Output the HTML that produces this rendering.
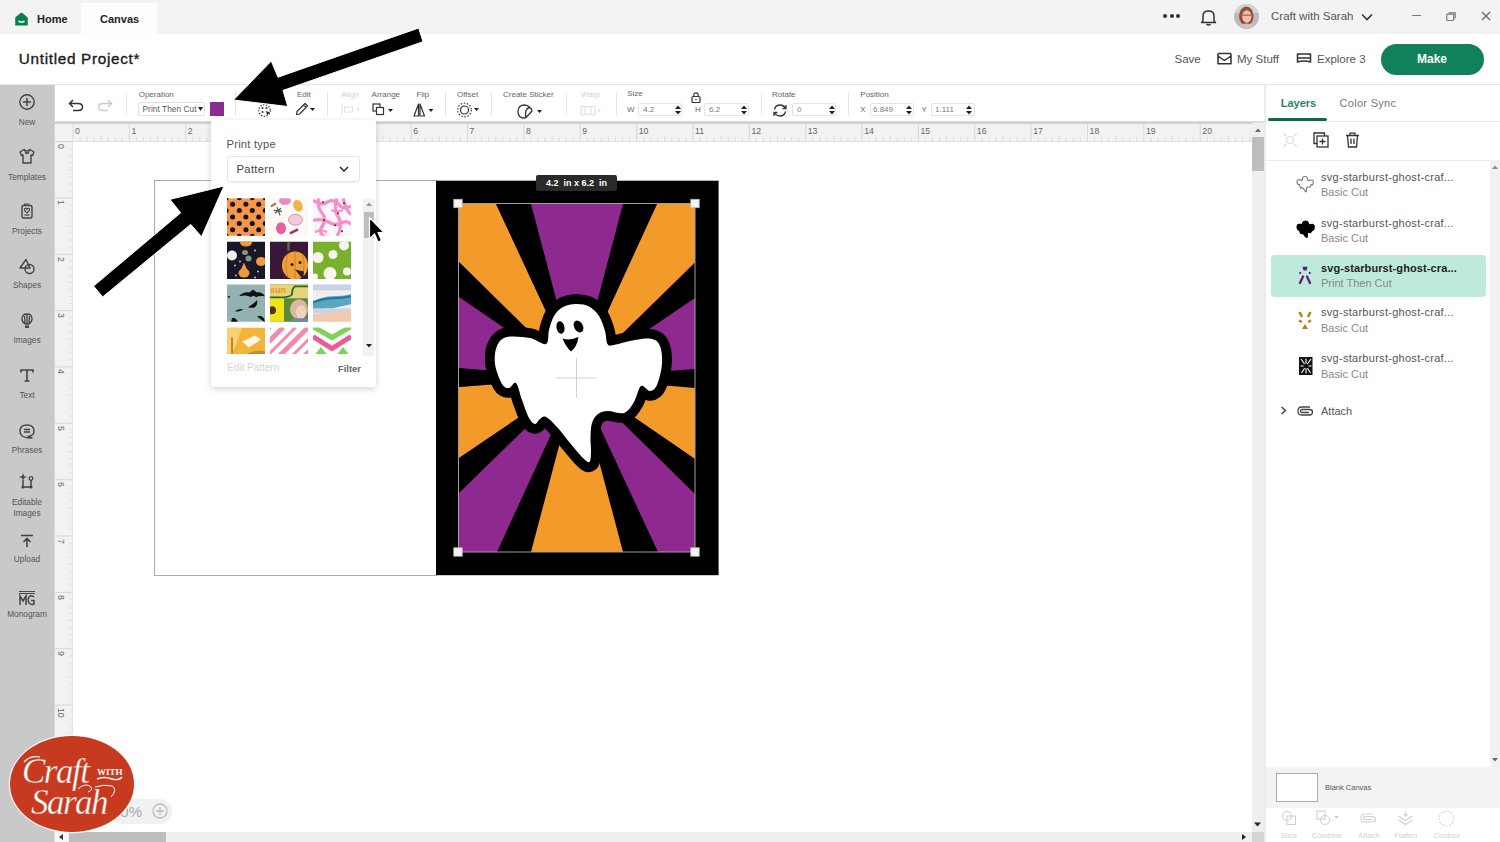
<!DOCTYPE html><html><head><meta charset="utf-8"><style>
html,body{margin:0;padding:0;width:1500px;height:842px;overflow:hidden;background:#fff;}
body{position:relative;font-family:"Liberation Sans",sans-serif;}
.t{position:absolute;white-space:nowrap;line-height:1;}
.r{position:absolute;box-sizing:border-box;}
svg{position:absolute;overflow:visible;}
</style></head><body>
<div class="r" style="left:0px;top:0px;width:1500px;height:34px;background:#f3f3f3;"></div>
<div class="r" style="left:81px;top:3px;width:76px;height:31px;background:#fdfdfd;"></div>
<svg style="left:15.2px;top:11.8px" width="13" height="14" viewBox="0 0 13 14"><path d="M5.6 1 Q6.5 0.3 7.4 1 L12.2 5 Q12.8 5.5 12.8 6.3 V13.6 H0.2 V6.3 Q0.2 5.5 0.8 5Z" fill="#0b7f4f"/><path d="M3.5 9 Q6.5 11.3 9.5 9" stroke="#c8f5e0" stroke-width="1.7" fill="none"/></svg>
<div class="t" style="left:37px;top:13.9px;font-size:11px;font-weight:bold;color:#222;">Home</div>
<div class="t" style="left:100px;top:13.9px;font-size:11px;font-weight:bold;color:#222;">Canvas</div>
<div class="r" style="left:1163.0px;top:14px;width:4px;height:4px;background:#333;border-radius:50%;"></div>
<div class="r" style="left:1169.5px;top:14px;width:4px;height:4px;background:#333;border-radius:50%;"></div>
<div class="r" style="left:1176.0px;top:14px;width:4px;height:4px;background:#333;border-radius:50%;"></div>
<svg style="left:1200px;top:8px" width="17" height="18" viewBox="0 0 17 18"><path d="M3 13 V8 Q3 3 8.5 3 Q14 3 14 8 V13 L15.5 14.5 H1.5Z" fill="none" stroke="#333" stroke-width="1.5" stroke-linejoin="round"/><path d="M6.5 16 Q8.5 18 10.5 16" fill="none" stroke="#333" stroke-width="1.5"/></svg>
<svg style="left:1233.5px;top:3.8px" width="25" height="25" viewBox="0 0 25 25"><defs><clipPath id="av"><circle cx="12.5" cy="12.5" r="12.4"/></clipPath></defs><g clip-path="url(#av)"><rect width="25" height="25" fill="#b9b9bf"/><rect x="0" y="0" width="25" height="9" fill="#c9d6de"/><ellipse cx="12.3" cy="12" rx="7.2" ry="9.5" fill="#a24a2a"/><ellipse cx="12.8" cy="12.5" rx="4.6" ry="6.2" fill="#e6c2b2"/><rect x="8.5" y="10.5" width="8.5" height="1.3" fill="#8a6a60"/><ellipse cx="12.5" cy="25" rx="10" ry="5.5" fill="#c6c4c4"/></g></svg>
<div class="t" style="left:1271px;top:11.3px;font-size:11.5px;color:#555;">Craft with Sarah</div>
<svg style="left:1361px;top:13px" width="12" height="8" viewBox="0 0 12 8"><path d="M1 1.5 L6 6.5 L11 1.5" fill="none" stroke="#333" stroke-width="1.6"/></svg>
<div class="r" style="left:1412px;top:15px;width:9px;height:1.3px;background:#777;"></div>
<svg style="left:1446px;top:12px" width="10" height="9" viewBox="0 0 10 9"><rect x="0.7" y="2.2" width="7" height="6.3" fill="none" stroke="#777" stroke-width="1.2" rx="1"/><path d="M2.5 0.8 H9.2 V6.5" fill="none" stroke="#777" stroke-width="1.2"/></svg>
<svg style="left:1481px;top:11px" width="10" height="10" viewBox="0 0 10 10"><path d="M1 1 L9 9 M9 1 L1 9" stroke="#666" stroke-width="1.3"/></svg>
<div class="r" style="left:0px;top:34px;width:1500px;height:50px;background:#fff;"></div>
<div class="t" style="left:18.8px;top:50.8px;font-size:15.3px;color:#1a1a1a;letter-spacing:0.68px;-webkit-text-stroke:0.35px #1a1a1a;">Untitled Project*</div>
<div class="t" style="left:1174.5px;top:53.6px;font-size:11.5px;color:#555;">Save</div>
<svg style="left:1217px;top:52px" width="15" height="13" viewBox="0 0 15 13"><path d="M1 1.5 V11.8 H14 V1.5 M1 4 L7.5 8.5 L14 4 M1 1.5 H14" fill="none" stroke="#333" stroke-width="1.5" stroke-linejoin="round"/></svg>
<div class="t" style="left:1237px;top:53.6px;font-size:11.5px;color:#555;">My Stuff</div>
<svg style="left:1296px;top:53px" width="16" height="10" viewBox="0 0 16 10"><path d="M1.5 1 H14.5 V9 Q8 7 1.5 9 Z M1.5 5 H14.5" fill="none" stroke="#333" stroke-width="1.5" stroke-linejoin="round"/></svg>
<div class="t" style="left:1317px;top:53.6px;font-size:11.5px;color:#555;">Explore 3</div>
<div class="r" style="left:1380.5px;top:43.5px;width:103.5px;height:31px;background:#11815a;border-radius:16px;"></div>
<div class="t" style="left:1332px;width:200px;text-align:center;top:53.3px;font-size:12px;color:#fff;font-weight:bold;">Make</div>
<div class="r" style="left:0px;top:83.5px;width:1500px;height:1.5px;background:#e6e6e6;"></div>
<div class="r" style="left:0px;top:85px;width:54px;height:757px;background:#c9c9c9;"></div>
<div class="r" style="left:54px;top:85px;width:1px;height:757px;background:#d8d8d8;"></div>
<div class="t" style="left:-73px;width:200px;text-align:center;top:117.8px;font-size:8.3px;color:#555;">New</div>
<div class="t" style="left:-73px;width:200px;text-align:center;top:172.8px;font-size:8.3px;color:#555;">Templates</div>
<div class="t" style="left:-73px;width:200px;text-align:center;top:226.8px;font-size:8.3px;color:#555;">Projects</div>
<div class="t" style="left:-73px;width:200px;text-align:center;top:281.3px;font-size:8.3px;color:#555;">Shapes</div>
<div class="t" style="left:-73px;width:200px;text-align:center;top:336.4px;font-size:8.3px;color:#555;">Images</div>
<div class="t" style="left:-73px;width:200px;text-align:center;top:391.4px;font-size:8.3px;color:#555;">Text</div>
<div class="t" style="left:-73px;width:200px;text-align:center;top:445.9px;font-size:8.3px;color:#555;">Phrases</div>
<div class="t" style="left:-73px;width:200px;text-align:center;top:497.9px;font-size:8.3px;color:#555;">Editable</div>
<div class="t" style="left:-73px;width:200px;text-align:center;top:509.2px;font-size:8.3px;color:#555;">Images</div>
<div class="t" style="left:-73px;width:200px;text-align:center;top:555.3px;font-size:8.3px;color:#555;">Upload</div>
<div class="t" style="left:-73px;width:200px;text-align:center;top:609.5px;font-size:8.3px;color:#555;">Monogram</div>
<svg style="left:19px;top:94px" width="16" height="16" viewBox="0 0 16 16"><circle cx="8" cy="8" r="7.2" fill="none" stroke="#444" stroke-width="1.4"/><path d="M8 4 V12 M4 8 H12" stroke="#444" stroke-width="1.5"/></svg>
<svg style="left:19px;top:148px" width="16" height="16" viewBox="0 0 16 16"><path d="M5 1.5 L1 4 L2.5 7.5 L4 7 V15 H12 V7 L13.5 7.5 L15 4 L11 1.5 Q8 4.5 5 1.5Z" fill="none" stroke="#444" stroke-width="1.4" stroke-linejoin="round"/><path d="M5.5 2 L7 6 L8 4 L9 6 L10.5 2" fill="none" stroke="#444" stroke-width="1"/></svg>
<svg style="left:21px;top:203px" width="12" height="16" viewBox="0 0 12 16"><rect x="1" y="2.5" width="10" height="12.5" rx="1.5" fill="none" stroke="#444" stroke-width="1.4"/><path d="M3.5 2.5 V1 H8.5" fill="none" stroke="#444" stroke-width="1.2"/><path d="M6 10 L3.6 7.4 Q2.8 5.6 4.5 5.3 Q5.5 5.2 6 6.2 Q6.5 5.2 7.5 5.3 Q9.2 5.6 8.4 7.4Z" fill="none" stroke="#444" stroke-width="1.1"/><path d="M3.5 12 H8.5" stroke="#444" stroke-width="1.2"/></svg>
<svg style="left:19px;top:258px" width="16" height="17" viewBox="0 0 16 17"><path d="M7 1.5 L1 10 H11Z" fill="none" stroke="#444" stroke-width="1.4" stroke-linejoin="round"/><circle cx="10.5" cy="11" r="4.5" fill="none" stroke="#444" stroke-width="1.4"/></svg>
<svg style="left:21px;top:313px" width="12" height="16" viewBox="0 0 12 16"><path d="M6 1 Q11 1 11 6 Q11 9 8 11 H4 Q1 9 1 6 Q1 1 6 1Z M6 1 V11 M3.5 3 Q4 8 4 11 M8.5 3 Q8 8 8 11" fill="none" stroke="#444" stroke-width="1.3"/><path d="M4 12.5 H8 V15 H4Z" fill="#444"/></svg>
<svg style="left:20px;top:369px" width="14" height="13" viewBox="0 0 14 13"><path d="M1 3.5 V1 H13 V3.5 M7 1 V12 M4.5 12 H9.5" fill="none" stroke="#444" stroke-width="1.6"/></svg>
<svg style="left:19px;top:424px" width="16" height="15" viewBox="0 0 16 15"><path d="M8 1 Q15 1 15 7 Q15 12 9 12.5 L13 14 Q4 14 2.5 11 Q1 9.5 1 7 Q1 1 8 1Z" fill="none" stroke="#444" stroke-width="1.4" stroke-linejoin="round"/><path d="M5 5.5 H11 M5 8 H11" stroke="#444" stroke-width="1.3"/></svg>
<svg style="left:19px;top:472px" width="16" height="17" viewBox="0 0 16 17"><path d="M4 8 V15 H12 V8 M4 15 H12" fill="none" stroke="#444" stroke-width="1.5"/><circle cx="4" cy="15" r="1.6" fill="#444"/><circle cx="12" cy="15" r="1.6" fill="#444"/><circle cx="12" cy="6.5" r="1.8" fill="none" stroke="#444" stroke-width="1.3"/><path d="M4 1 L5 4 L8 5 L5 6 L4 9 L3 6 L0 5 L3 4Z" fill="#444"/></svg>
<svg style="left:20px;top:534px" width="14" height="14" viewBox="0 0 14 14"><path d="M1 1.5 H13 M7 13 V5 M3.5 8 L7 4.5 L10.5 8" fill="none" stroke="#444" stroke-width="1.6"/></svg>
<svg style="left:18px;top:590px" width="18" height="16" viewBox="0 0 18 16"><path d="M1 1.5 H17 M1 3.5 H17" stroke="#444" stroke-width="1"/><path d="M2 15 V6 L5 11 L8 6 V15" fill="none" stroke="#444" stroke-width="1.5"/><path d="M16 7 Q14 5 12 6 Q9.5 8 10.5 12 Q12 15.5 16 14 V10.5 H13" fill="none" stroke="#444" stroke-width="1.5"/></svg>
<div class="r" style="left:55px;top:85px;width:1211px;height:37px;background:#fff;"></div>
<div class="r" style="left:55px;top:121px;width:1211px;height:1.5px;background:#dcdcdc;"></div>
<svg style="left:68px;top:99px" width="16" height="13" viewBox="0 0 16 13"><path d="M5 1 L1.5 4.5 L5 8 M1.5 4.5 H10 Q14.5 4.5 14.5 8 Q14.5 11.5 10 11.5 H5" fill="none" stroke="#333" stroke-width="1.5"/></svg>
<svg style="left:97px;top:99px" width="16" height="13" viewBox="0 0 16 13"><path d="M11 1 L14.5 4.5 L11 8 M14.5 4.5 H6 Q1.5 4.5 1.5 8 Q1.5 11.5 6 11.5 H11" fill="none" stroke="#ccc" stroke-width="1.5"/></svg>
<div class="r" style="left:126px;top:92px;width:1px;height:24px;background:#e6e6e6;"></div>
<div class="r" style="left:235px;top:92px;width:1px;height:24px;background:#e6e6e6;"></div>
<div class="r" style="left:326.6px;top:92px;width:1px;height:24px;background:#e6e6e6;"></div>
<div class="r" style="left:445px;top:92px;width:1px;height:24px;background:#e6e6e6;"></div>
<div class="r" style="left:491px;top:92px;width:1px;height:24px;background:#e6e6e6;"></div>
<div class="r" style="left:566.4px;top:92px;width:1px;height:24px;background:#e6e6e6;"></div>
<div class="r" style="left:615.6px;top:92px;width:1px;height:24px;background:#e6e6e6;"></div>
<div class="r" style="left:760.7px;top:92px;width:1px;height:24px;background:#e6e6e6;"></div>
<div class="r" style="left:848.2px;top:92px;width:1px;height:24px;background:#e6e6e6;"></div>
<div class="t" style="left:138.7px;top:90.9px;font-size:8px;color:#666;">Operation</div>
<div class="r" style="left:138px;top:102px;width:67px;height:13.5px;border:1px solid #e0e0e0;border-radius:2px;background:#fff;"></div>
<div class="t" style="left:142.5px;top:106.1px;font-size:8.2px;color:#555;letter-spacing:0.1px;">Print Then Cut</div>
<svg style="left:198px;top:107px" width="5" height="4" viewBox="0 0 5 4"><path d="M0 0 H5 L2.5 4Z" fill="#222"/></svg>
<div class="r" style="left:210px;top:102px;width:14px;height:14px;background:#8d2a90;"></div>
<svg style="left:257.5px;top:104px" width="15" height="13" viewBox="0 0 15 13"><circle cx="6.5" cy="6.5" r="5.8" fill="none" stroke="#333" stroke-width="1.3" stroke-dasharray="1.3 1.5"/><circle cx="4.5" cy="4" r="1" fill="#333"/><circle cx="8.5" cy="4" r="1" fill="#333"/><circle cx="4.5" cy="8" r="1" fill="#333"/><path d="M8 7 L12 8.5 L9 11Z" fill="#222"/></svg>
<div class="t" style="left:297px;top:90.9px;font-size:8px;color:#666;">Edit</div>
<svg style="left:295px;top:102px" width="22" height="14" viewBox="0 0 22 14"><path d="M1.5 12.5 L2 9.5 L10 1.5 L12.5 4 L4.5 12 Z M8.5 3 L11 5.5" fill="none" stroke="#333" stroke-width="1.2" stroke-linejoin="round"/><path d="M15 6 H20 L17.5 9Z" fill="#222"/></svg>
<div class="t" style="left:341px;top:90.8px;font-size:8px;color:#d0d0d0;">Align</div>
<svg style="left:341px;top:104px" width="22" height="11" viewBox="0 0 22 11"><path d="M1 0 V11" stroke="#ddd" stroke-width="1"/><rect x="3.5" y="3" width="8" height="5" fill="none" stroke="#ddd" stroke-width="1"/><path d="M15 4.5 H19 L17 7Z" fill="#ddd"/></svg>
<div class="t" style="left:371.6px;top:90.8px;font-size:8px;color:#666;">Arrange</div>
<svg style="left:372px;top:103px" width="22" height="14" viewBox="0 0 22 14"><rect x="1" y="1" width="7" height="7" fill="none" stroke="#333" stroke-width="1.2"/><rect x="4.5" y="4.5" width="7" height="7" fill="#fff" stroke="#333" stroke-width="1.2"/><path d="M16 6 H21 L18.5 9Z" fill="#222"/></svg>
<div class="t" style="left:416.4px;top:90.8px;font-size:8px;color:#666;">Flip</div>
<svg style="left:413px;top:103px" width="22" height="14" viewBox="0 0 22 14"><path d="M5.5 1 L1 13 H5.5Z M7 1 L11.5 13 H7Z" fill="none" stroke="#333" stroke-width="1.2" stroke-linejoin="round"/><path d="M15.5 6 H20.5 L18 9Z" fill="#222"/></svg>
<div class="t" style="left:457px;top:90.8px;font-size:8px;color:#666;">Offset</div>
<svg style="left:457px;top:102px" width="24" height="16" viewBox="0 0 24 16"><circle cx="7.5" cy="8" r="4" fill="none" stroke="#333" stroke-width="1.2"/><circle cx="7.5" cy="8" r="6.8" fill="none" stroke="#333" stroke-width="1.2" stroke-dasharray="1.5 1.6"/><path d="M17 6 H22 L19.5 9Z" fill="#222"/></svg>
<div class="t" style="left:503px;top:90.8px;font-size:8px;color:#666;">Create Sticker</div>
<svg style="left:517px;top:104px" width="26" height="15" viewBox="0 0 26 15"><path d="M13 3.5 Q10.5 1 7.5 1 Q1 1 1 7.5 Q1 14 7.5 14 Q8.5 14 9 13.5 L15 7 Q15 5 13 3.5 Q9 4 8.5 9 Q8.5 12 9 13.5" fill="none" stroke="#333" stroke-width="1.3" stroke-linejoin="round"/><path d="M20 6 H25 L22.5 9Z" fill="#222"/></svg>
<div class="t" style="left:581px;top:90.8px;font-size:8px;color:#d0d0d0;">Warp</div>
<svg style="left:580px;top:105px" width="22" height="11" viewBox="0 0 22 11"><path d="M1 1 Q8 3 15 1 V10 Q8 8 1 10Z M5 2 V9 M11 2 V9" fill="none" stroke="#ddd" stroke-width="1"/><path d="M17 4.5 H21 L19 7Z" fill="#ddd"/></svg>
<div class="t" style="left:627.2px;top:90.4px;font-size:8px;color:#666;">Size</div>
<div class="t" style="left:627px;top:105.7px;font-size:8px;color:#666;">W</div>
<div class="r" style="left:638.4px;top:103px;width:44px;height:13px;border:1px solid #e4e4e4;border-radius:2px;"></div>
<div class="t" style="left:643px;top:105.7px;font-size:8px;color:#777;">4.2</div>
<svg style="left:674.5px;top:104.5px" width="6" height="10" viewBox="0 0 6 10"><path d="M0 4 L3 0.5 L6 4Z M0 6 L3 9.5 L6 6Z" fill="#222"/></svg>
<svg style="left:690.5px;top:92px" width="10" height="11" viewBox="0 0 10 11"><rect x="1" y="4.5" width="8" height="6" rx="1" fill="none" stroke="#333" stroke-width="1.2"/><path d="M2.8 4.5 V3 Q2.8 0.8 5 0.8 Q7.2 0.8 7.2 3 V4.5" fill="none" stroke="#333" stroke-width="1.2"/><circle cx="5" cy="7.5" r="0.8" fill="#333"/></svg>
<div class="t" style="left:695px;top:105.7px;font-size:8px;color:#666;">H</div>
<div class="r" style="left:704.2px;top:103px;width:44.6px;height:13px;border:1px solid #e4e4e4;border-radius:2px;"></div>
<div class="t" style="left:709px;top:105.7px;font-size:8px;color:#777;">6.2</div>
<svg style="left:741px;top:104.5px" width="6" height="10" viewBox="0 0 6 10"><path d="M0 4 L3 0.5 L6 4Z M0 6 L3 9.5 L6 6Z" fill="#222"/></svg>
<div class="t" style="left:772px;top:90.8px;font-size:8px;color:#666;">Rotate</div>
<svg style="left:773px;top:103.5px" width="14" height="13" viewBox="0 0 14 13"><path d="M1.5 5.5 Q2.5 1 7 1 Q10.5 1 12.5 4 M12.5 7.5 Q11.5 12 7 12 Q3.5 12 1.5 9" fill="none" stroke="#333" stroke-width="1.3"/><path d="M13 1 V4.5 H9.5 M1 12 V8.5 H4.5" fill="none" stroke="#333" stroke-width="1.3"/></svg>
<div class="r" style="left:792.4px;top:103px;width:44px;height:13px;border:1px solid #e4e4e4;border-radius:2px;"></div>
<div class="t" style="left:797px;top:105.7px;font-size:8px;color:#888;">0</div>
<svg style="left:828.5px;top:104.5px" width="6" height="10" viewBox="0 0 6 10"><path d="M0 4 L3 0.5 L6 4Z M0 6 L3 9.5 L6 6Z" fill="#222"/></svg>
<div class="t" style="left:860.3px;top:90.8px;font-size:8px;color:#666;">Position</div>
<div class="t" style="left:860.3px;top:105.7px;font-size:8px;color:#666;">X</div>
<div class="r" style="left:869.7px;top:103px;width:44px;height:13px;border:1px solid #e4e4e4;border-radius:2px;"></div>
<div class="t" style="left:873px;top:105.7px;font-size:8px;color:#777;">6.849</div>
<svg style="left:905.5px;top:104.5px" width="6" height="10" viewBox="0 0 6 10"><path d="M0 4 L3 0.5 L6 4Z M0 6 L3 9.5 L6 6Z" fill="#222"/></svg>
<div class="t" style="left:921.6px;top:105.7px;font-size:8px;color:#666;">Y</div>
<div class="r" style="left:930.5px;top:103px;width:44.3px;height:13px;border:1px solid #e4e4e4;border-radius:2px;"></div>
<div class="t" style="left:935px;top:105.7px;font-size:8px;color:#777;">1.111</div>
<svg style="left:966px;top:104.5px" width="6" height="10" viewBox="0 0 6 10"><path d="M0 4 L3 0.5 L6 4Z M0 6 L3 9.5 L6 6Z" fill="#222"/></svg>
<div class="r" style="left:55px;top:122.5px;width:1197px;height:19px;background:#f2f2f2;"></div>
<div class="r" style="left:55px;top:122px;width:1197px;height:1.5px;background:#cfcfcf;"></div>
<div class="r" style="left:55px;top:141px;width:18px;height:691px;background:#f2f2f2;"></div>
<div class="r" style="left:72px;top:141px;width:1.2px;height:691px;background:#e4e4e4;"></div>
<div class="r" style="left:55px;top:140.5px;width:1197px;height:1px;background:#e4e4e4;"></div>
<svg style="left:0;top:0" width="1500" height="842"><rect x="72.5" y="123" width="1" height="18" fill="#d8d8d8"/><rect x="79.5" y="137" width="1" height="4" fill="#dcdcdc"/><rect x="86.6" y="137" width="1" height="4" fill="#dcdcdc"/><rect x="93.6" y="137" width="1" height="4" fill="#dcdcdc"/><rect x="100.7" y="135" width="1" height="6" fill="#dcdcdc"/><rect x="107.7" y="137" width="1" height="4" fill="#dcdcdc"/><rect x="114.8" y="137" width="1" height="4" fill="#dcdcdc"/><rect x="121.8" y="137" width="1" height="4" fill="#dcdcdc"/><rect x="128.9" y="123" width="1" height="18" fill="#d8d8d8"/><rect x="135.9" y="137" width="1" height="4" fill="#dcdcdc"/><rect x="143.0" y="137" width="1" height="4" fill="#dcdcdc"/><rect x="150.0" y="137" width="1" height="4" fill="#dcdcdc"/><rect x="157.0" y="135" width="1" height="6" fill="#dcdcdc"/><rect x="164.1" y="137" width="1" height="4" fill="#dcdcdc"/><rect x="171.1" y="137" width="1" height="4" fill="#dcdcdc"/><rect x="178.2" y="137" width="1" height="4" fill="#dcdcdc"/><rect x="185.2" y="123" width="1" height="18" fill="#d8d8d8"/><rect x="192.3" y="137" width="1" height="4" fill="#dcdcdc"/><rect x="199.3" y="137" width="1" height="4" fill="#dcdcdc"/><rect x="206.4" y="137" width="1" height="4" fill="#dcdcdc"/><rect x="213.4" y="135" width="1" height="6" fill="#dcdcdc"/><rect x="220.4" y="137" width="1" height="4" fill="#dcdcdc"/><rect x="227.5" y="137" width="1" height="4" fill="#dcdcdc"/><rect x="234.5" y="137" width="1" height="4" fill="#dcdcdc"/><rect x="241.6" y="123" width="1" height="18" fill="#d8d8d8"/><rect x="248.6" y="137" width="1" height="4" fill="#dcdcdc"/><rect x="255.7" y="137" width="1" height="4" fill="#dcdcdc"/><rect x="262.7" y="137" width="1" height="4" fill="#dcdcdc"/><rect x="269.8" y="135" width="1" height="6" fill="#dcdcdc"/><rect x="276.8" y="137" width="1" height="4" fill="#dcdcdc"/><rect x="283.8" y="137" width="1" height="4" fill="#dcdcdc"/><rect x="290.9" y="137" width="1" height="4" fill="#dcdcdc"/><rect x="297.9" y="123" width="1" height="18" fill="#d8d8d8"/><rect x="305.0" y="137" width="1" height="4" fill="#dcdcdc"/><rect x="312.0" y="137" width="1" height="4" fill="#dcdcdc"/><rect x="319.1" y="137" width="1" height="4" fill="#dcdcdc"/><rect x="326.1" y="135" width="1" height="6" fill="#dcdcdc"/><rect x="333.2" y="137" width="1" height="4" fill="#dcdcdc"/><rect x="340.2" y="137" width="1" height="4" fill="#dcdcdc"/><rect x="347.3" y="137" width="1" height="4" fill="#dcdcdc"/><rect x="354.3" y="123" width="1" height="18" fill="#d8d8d8"/><rect x="361.3" y="137" width="1" height="4" fill="#dcdcdc"/><rect x="368.4" y="137" width="1" height="4" fill="#dcdcdc"/><rect x="375.4" y="137" width="1" height="4" fill="#dcdcdc"/><rect x="382.5" y="135" width="1" height="6" fill="#dcdcdc"/><rect x="389.5" y="137" width="1" height="4" fill="#dcdcdc"/><rect x="396.6" y="137" width="1" height="4" fill="#dcdcdc"/><rect x="403.6" y="137" width="1" height="4" fill="#dcdcdc"/><rect x="410.7" y="123" width="1" height="18" fill="#d8d8d8"/><rect x="417.7" y="137" width="1" height="4" fill="#dcdcdc"/><rect x="424.7" y="137" width="1" height="4" fill="#dcdcdc"/><rect x="431.8" y="137" width="1" height="4" fill="#dcdcdc"/><rect x="438.8" y="135" width="1" height="6" fill="#dcdcdc"/><rect x="445.9" y="137" width="1" height="4" fill="#dcdcdc"/><rect x="452.9" y="137" width="1" height="4" fill="#dcdcdc"/><rect x="460.0" y="137" width="1" height="4" fill="#dcdcdc"/><rect x="467.0" y="123" width="1" height="18" fill="#d8d8d8"/><rect x="474.1" y="137" width="1" height="4" fill="#dcdcdc"/><rect x="481.1" y="137" width="1" height="4" fill="#dcdcdc"/><rect x="488.2" y="137" width="1" height="4" fill="#dcdcdc"/><rect x="495.2" y="135" width="1" height="6" fill="#dcdcdc"/><rect x="502.2" y="137" width="1" height="4" fill="#dcdcdc"/><rect x="509.3" y="137" width="1" height="4" fill="#dcdcdc"/><rect x="516.3" y="137" width="1" height="4" fill="#dcdcdc"/><rect x="523.4" y="123" width="1" height="18" fill="#d8d8d8"/><rect x="530.4" y="137" width="1" height="4" fill="#dcdcdc"/><rect x="537.5" y="137" width="1" height="4" fill="#dcdcdc"/><rect x="544.5" y="137" width="1" height="4" fill="#dcdcdc"/><rect x="551.6" y="135" width="1" height="6" fill="#dcdcdc"/><rect x="558.6" y="137" width="1" height="4" fill="#dcdcdc"/><rect x="565.6" y="137" width="1" height="4" fill="#dcdcdc"/><rect x="572.7" y="137" width="1" height="4" fill="#dcdcdc"/><rect x="579.7" y="123" width="1" height="18" fill="#d8d8d8"/><rect x="586.8" y="137" width="1" height="4" fill="#dcdcdc"/><rect x="593.8" y="137" width="1" height="4" fill="#dcdcdc"/><rect x="600.9" y="137" width="1" height="4" fill="#dcdcdc"/><rect x="607.9" y="135" width="1" height="6" fill="#dcdcdc"/><rect x="615.0" y="137" width="1" height="4" fill="#dcdcdc"/><rect x="622.0" y="137" width="1" height="4" fill="#dcdcdc"/><rect x="629.1" y="137" width="1" height="4" fill="#dcdcdc"/><rect x="636.1" y="123" width="1" height="18" fill="#d8d8d8"/><rect x="643.1" y="137" width="1" height="4" fill="#dcdcdc"/><rect x="650.2" y="137" width="1" height="4" fill="#dcdcdc"/><rect x="657.2" y="137" width="1" height="4" fill="#dcdcdc"/><rect x="664.3" y="135" width="1" height="6" fill="#dcdcdc"/><rect x="671.3" y="137" width="1" height="4" fill="#dcdcdc"/><rect x="678.4" y="137" width="1" height="4" fill="#dcdcdc"/><rect x="685.4" y="137" width="1" height="4" fill="#dcdcdc"/><rect x="692.5" y="123" width="1" height="18" fill="#d8d8d8"/><rect x="699.5" y="137" width="1" height="4" fill="#dcdcdc"/><rect x="706.6" y="137" width="1" height="4" fill="#dcdcdc"/><rect x="713.6" y="137" width="1" height="4" fill="#dcdcdc"/><rect x="720.6" y="135" width="1" height="6" fill="#dcdcdc"/><rect x="727.7" y="137" width="1" height="4" fill="#dcdcdc"/><rect x="734.7" y="137" width="1" height="4" fill="#dcdcdc"/><rect x="741.8" y="137" width="1" height="4" fill="#dcdcdc"/><rect x="748.8" y="123" width="1" height="18" fill="#d8d8d8"/><rect x="755.9" y="137" width="1" height="4" fill="#dcdcdc"/><rect x="762.9" y="137" width="1" height="4" fill="#dcdcdc"/><rect x="770.0" y="137" width="1" height="4" fill="#dcdcdc"/><rect x="777.0" y="135" width="1" height="6" fill="#dcdcdc"/><rect x="784.0" y="137" width="1" height="4" fill="#dcdcdc"/><rect x="791.1" y="137" width="1" height="4" fill="#dcdcdc"/><rect x="798.1" y="137" width="1" height="4" fill="#dcdcdc"/><rect x="805.2" y="123" width="1" height="18" fill="#d8d8d8"/><rect x="812.2" y="137" width="1" height="4" fill="#dcdcdc"/><rect x="819.3" y="137" width="1" height="4" fill="#dcdcdc"/><rect x="826.3" y="137" width="1" height="4" fill="#dcdcdc"/><rect x="833.4" y="135" width="1" height="6" fill="#dcdcdc"/><rect x="840.4" y="137" width="1" height="4" fill="#dcdcdc"/><rect x="847.4" y="137" width="1" height="4" fill="#dcdcdc"/><rect x="854.5" y="137" width="1" height="4" fill="#dcdcdc"/><rect x="861.5" y="123" width="1" height="18" fill="#d8d8d8"/><rect x="868.6" y="137" width="1" height="4" fill="#dcdcdc"/><rect x="875.6" y="137" width="1" height="4" fill="#dcdcdc"/><rect x="882.7" y="137" width="1" height="4" fill="#dcdcdc"/><rect x="889.7" y="135" width="1" height="6" fill="#dcdcdc"/><rect x="896.8" y="137" width="1" height="4" fill="#dcdcdc"/><rect x="903.8" y="137" width="1" height="4" fill="#dcdcdc"/><rect x="910.9" y="137" width="1" height="4" fill="#dcdcdc"/><rect x="917.9" y="123" width="1" height="18" fill="#d8d8d8"/><rect x="924.9" y="137" width="1" height="4" fill="#dcdcdc"/><rect x="932.0" y="137" width="1" height="4" fill="#dcdcdc"/><rect x="939.0" y="137" width="1" height="4" fill="#dcdcdc"/><rect x="946.1" y="135" width="1" height="6" fill="#dcdcdc"/><rect x="953.1" y="137" width="1" height="4" fill="#dcdcdc"/><rect x="960.2" y="137" width="1" height="4" fill="#dcdcdc"/><rect x="967.2" y="137" width="1" height="4" fill="#dcdcdc"/><rect x="974.3" y="123" width="1" height="18" fill="#d8d8d8"/><rect x="981.3" y="137" width="1" height="4" fill="#dcdcdc"/><rect x="988.4" y="137" width="1" height="4" fill="#dcdcdc"/><rect x="995.4" y="137" width="1" height="4" fill="#dcdcdc"/><rect x="1002.4" y="135" width="1" height="6" fill="#dcdcdc"/><rect x="1009.5" y="137" width="1" height="4" fill="#dcdcdc"/><rect x="1016.5" y="137" width="1" height="4" fill="#dcdcdc"/><rect x="1023.6" y="137" width="1" height="4" fill="#dcdcdc"/><rect x="1030.6" y="123" width="1" height="18" fill="#d8d8d8"/><rect x="1037.7" y="137" width="1" height="4" fill="#dcdcdc"/><rect x="1044.7" y="137" width="1" height="4" fill="#dcdcdc"/><rect x="1051.8" y="137" width="1" height="4" fill="#dcdcdc"/><rect x="1058.8" y="135" width="1" height="6" fill="#dcdcdc"/><rect x="1065.8" y="137" width="1" height="4" fill="#dcdcdc"/><rect x="1072.9" y="137" width="1" height="4" fill="#dcdcdc"/><rect x="1079.9" y="137" width="1" height="4" fill="#dcdcdc"/><rect x="1087.0" y="123" width="1" height="18" fill="#d8d8d8"/><rect x="1094.0" y="137" width="1" height="4" fill="#dcdcdc"/><rect x="1101.1" y="137" width="1" height="4" fill="#dcdcdc"/><rect x="1108.1" y="137" width="1" height="4" fill="#dcdcdc"/><rect x="1115.2" y="135" width="1" height="6" fill="#dcdcdc"/><rect x="1122.2" y="137" width="1" height="4" fill="#dcdcdc"/><rect x="1129.2" y="137" width="1" height="4" fill="#dcdcdc"/><rect x="1136.3" y="137" width="1" height="4" fill="#dcdcdc"/><rect x="1143.3" y="123" width="1" height="18" fill="#d8d8d8"/><rect x="1150.4" y="137" width="1" height="4" fill="#dcdcdc"/><rect x="1157.4" y="137" width="1" height="4" fill="#dcdcdc"/><rect x="1164.5" y="137" width="1" height="4" fill="#dcdcdc"/><rect x="1171.5" y="135" width="1" height="6" fill="#dcdcdc"/><rect x="1178.6" y="137" width="1" height="4" fill="#dcdcdc"/><rect x="1185.6" y="137" width="1" height="4" fill="#dcdcdc"/><rect x="1192.7" y="137" width="1" height="4" fill="#dcdcdc"/><rect x="1199.7" y="123" width="1" height="18" fill="#d8d8d8"/><rect x="1206.7" y="137" width="1" height="4" fill="#dcdcdc"/><rect x="1213.8" y="137" width="1" height="4" fill="#dcdcdc"/><rect x="1220.8" y="137" width="1" height="4" fill="#dcdcdc"/><rect x="1227.9" y="135" width="1" height="6" fill="#dcdcdc"/><rect x="1234.9" y="137" width="1" height="4" fill="#dcdcdc"/><rect x="1242.0" y="137" width="1" height="4" fill="#dcdcdc"/><rect x="1249.0" y="137" width="1" height="4" fill="#dcdcdc"/><rect x="55" y="141.0" width="18" height="1" fill="#d6d6d6"/><rect x="69" y="148.0" width="4" height="1" fill="#e4e4e4"/><rect x="69" y="155.1" width="4" height="1" fill="#e4e4e4"/><rect x="69" y="162.1" width="4" height="1" fill="#e4e4e4"/><rect x="67" y="169.2" width="6" height="1" fill="#e4e4e4"/><rect x="69" y="176.2" width="4" height="1" fill="#e4e4e4"/><rect x="69" y="183.3" width="4" height="1" fill="#e4e4e4"/><rect x="69" y="190.3" width="4" height="1" fill="#e4e4e4"/><rect x="55" y="197.4" width="18" height="1" fill="#d6d6d6"/><rect x="69" y="204.4" width="4" height="1" fill="#e4e4e4"/><rect x="69" y="211.5" width="4" height="1" fill="#e4e4e4"/><rect x="69" y="218.5" width="4" height="1" fill="#e4e4e4"/><rect x="67" y="225.5" width="6" height="1" fill="#e4e4e4"/><rect x="69" y="232.6" width="4" height="1" fill="#e4e4e4"/><rect x="69" y="239.6" width="4" height="1" fill="#e4e4e4"/><rect x="69" y="246.7" width="4" height="1" fill="#e4e4e4"/><rect x="55" y="253.7" width="18" height="1" fill="#d6d6d6"/><rect x="69" y="260.8" width="4" height="1" fill="#e4e4e4"/><rect x="69" y="267.8" width="4" height="1" fill="#e4e4e4"/><rect x="69" y="274.9" width="4" height="1" fill="#e4e4e4"/><rect x="67" y="281.9" width="6" height="1" fill="#e4e4e4"/><rect x="69" y="288.9" width="4" height="1" fill="#e4e4e4"/><rect x="69" y="296.0" width="4" height="1" fill="#e4e4e4"/><rect x="69" y="303.0" width="4" height="1" fill="#e4e4e4"/><rect x="55" y="310.1" width="18" height="1" fill="#d6d6d6"/><rect x="69" y="317.1" width="4" height="1" fill="#e4e4e4"/><rect x="69" y="324.2" width="4" height="1" fill="#e4e4e4"/><rect x="69" y="331.2" width="4" height="1" fill="#e4e4e4"/><rect x="67" y="338.3" width="6" height="1" fill="#e4e4e4"/><rect x="69" y="345.3" width="4" height="1" fill="#e4e4e4"/><rect x="69" y="352.3" width="4" height="1" fill="#e4e4e4"/><rect x="69" y="359.4" width="4" height="1" fill="#e4e4e4"/><rect x="55" y="366.4" width="18" height="1" fill="#d6d6d6"/><rect x="69" y="373.5" width="4" height="1" fill="#e4e4e4"/><rect x="69" y="380.5" width="4" height="1" fill="#e4e4e4"/><rect x="69" y="387.6" width="4" height="1" fill="#e4e4e4"/><rect x="67" y="394.6" width="6" height="1" fill="#e4e4e4"/><rect x="69" y="401.7" width="4" height="1" fill="#e4e4e4"/><rect x="69" y="408.7" width="4" height="1" fill="#e4e4e4"/><rect x="69" y="415.8" width="4" height="1" fill="#e4e4e4"/><rect x="55" y="422.8" width="18" height="1" fill="#d6d6d6"/><rect x="69" y="429.8" width="4" height="1" fill="#e4e4e4"/><rect x="69" y="436.9" width="4" height="1" fill="#e4e4e4"/><rect x="69" y="443.9" width="4" height="1" fill="#e4e4e4"/><rect x="67" y="451.0" width="6" height="1" fill="#e4e4e4"/><rect x="69" y="458.0" width="4" height="1" fill="#e4e4e4"/><rect x="69" y="465.1" width="4" height="1" fill="#e4e4e4"/><rect x="69" y="472.1" width="4" height="1" fill="#e4e4e4"/><rect x="55" y="479.2" width="18" height="1" fill="#d6d6d6"/><rect x="69" y="486.2" width="4" height="1" fill="#e4e4e4"/><rect x="69" y="493.2" width="4" height="1" fill="#e4e4e4"/><rect x="69" y="500.3" width="4" height="1" fill="#e4e4e4"/><rect x="67" y="507.3" width="6" height="1" fill="#e4e4e4"/><rect x="69" y="514.4" width="4" height="1" fill="#e4e4e4"/><rect x="69" y="521.4" width="4" height="1" fill="#e4e4e4"/><rect x="69" y="528.5" width="4" height="1" fill="#e4e4e4"/><rect x="55" y="535.5" width="18" height="1" fill="#d6d6d6"/><rect x="69" y="542.6" width="4" height="1" fill="#e4e4e4"/><rect x="69" y="549.6" width="4" height="1" fill="#e4e4e4"/><rect x="69" y="556.7" width="4" height="1" fill="#e4e4e4"/><rect x="67" y="563.7" width="6" height="1" fill="#e4e4e4"/><rect x="69" y="570.7" width="4" height="1" fill="#e4e4e4"/><rect x="69" y="577.8" width="4" height="1" fill="#e4e4e4"/><rect x="69" y="584.8" width="4" height="1" fill="#e4e4e4"/><rect x="55" y="591.9" width="18" height="1" fill="#d6d6d6"/><rect x="69" y="598.9" width="4" height="1" fill="#e4e4e4"/><rect x="69" y="606.0" width="4" height="1" fill="#e4e4e4"/><rect x="69" y="613.0" width="4" height="1" fill="#e4e4e4"/><rect x="67" y="620.1" width="6" height="1" fill="#e4e4e4"/><rect x="69" y="627.1" width="4" height="1" fill="#e4e4e4"/><rect x="69" y="634.1" width="4" height="1" fill="#e4e4e4"/><rect x="69" y="641.2" width="4" height="1" fill="#e4e4e4"/><rect x="55" y="648.2" width="18" height="1" fill="#d6d6d6"/><rect x="69" y="655.3" width="4" height="1" fill="#e4e4e4"/><rect x="69" y="662.3" width="4" height="1" fill="#e4e4e4"/><rect x="69" y="669.4" width="4" height="1" fill="#e4e4e4"/><rect x="67" y="676.4" width="6" height="1" fill="#e4e4e4"/><rect x="69" y="683.5" width="4" height="1" fill="#e4e4e4"/><rect x="69" y="690.5" width="4" height="1" fill="#e4e4e4"/><rect x="69" y="697.6" width="4" height="1" fill="#e4e4e4"/><rect x="55" y="704.6" width="18" height="1" fill="#d6d6d6"/><rect x="69" y="711.6" width="4" height="1" fill="#e4e4e4"/><rect x="69" y="718.7" width="4" height="1" fill="#e4e4e4"/><rect x="69" y="725.7" width="4" height="1" fill="#e4e4e4"/><rect x="67" y="732.8" width="6" height="1" fill="#e4e4e4"/><rect x="69" y="739.8" width="4" height="1" fill="#e4e4e4"/><rect x="69" y="746.9" width="4" height="1" fill="#e4e4e4"/><rect x="69" y="753.9" width="4" height="1" fill="#e4e4e4"/><rect x="55" y="761.0" width="18" height="1" fill="#d6d6d6"/><rect x="69" y="768.0" width="4" height="1" fill="#e4e4e4"/><rect x="69" y="775.1" width="4" height="1" fill="#e4e4e4"/><rect x="69" y="782.1" width="4" height="1" fill="#e4e4e4"/><rect x="67" y="789.1" width="6" height="1" fill="#e4e4e4"/><rect x="69" y="796.2" width="4" height="1" fill="#e4e4e4"/><rect x="69" y="803.2" width="4" height="1" fill="#e4e4e4"/><rect x="69" y="810.3" width="4" height="1" fill="#e4e4e4"/></svg>
<div class="t" style="left:75.1px;top:126.9px;font-size:8.7px;color:#666;">0</div>
<div class="t" style="left:131.46px;top:126.9px;font-size:8.7px;color:#666;">1</div>
<div class="t" style="left:187.82px;top:126.9px;font-size:8.7px;color:#666;">2</div>
<div class="t" style="left:244.17999999999998px;top:126.9px;font-size:8.7px;color:#666;">3</div>
<div class="t" style="left:300.54px;top:126.9px;font-size:8.7px;color:#666;">4</div>
<div class="t" style="left:356.90000000000003px;top:126.9px;font-size:8.7px;color:#666;">5</div>
<div class="t" style="left:413.26px;top:126.9px;font-size:8.7px;color:#666;">6</div>
<div class="t" style="left:469.62px;top:126.9px;font-size:8.7px;color:#666;">7</div>
<div class="t" style="left:525.98px;top:126.9px;font-size:8.7px;color:#666;">8</div>
<div class="t" style="left:582.34px;top:126.9px;font-size:8.7px;color:#666;">9</div>
<div class="t" style="left:638.7px;top:126.9px;font-size:8.7px;color:#666;">10</div>
<div class="t" style="left:695.0600000000001px;top:126.9px;font-size:8.7px;color:#666;">11</div>
<div class="t" style="left:751.42px;top:126.9px;font-size:8.7px;color:#666;">12</div>
<div class="t" style="left:807.78px;top:126.9px;font-size:8.7px;color:#666;">13</div>
<div class="t" style="left:864.14px;top:126.9px;font-size:8.7px;color:#666;">14</div>
<div class="t" style="left:920.5px;top:126.9px;font-size:8.7px;color:#666;">15</div>
<div class="t" style="left:976.86px;top:126.9px;font-size:8.7px;color:#666;">16</div>
<div class="t" style="left:1033.2199999999998px;top:126.9px;font-size:8.7px;color:#666;">17</div>
<div class="t" style="left:1089.58px;top:126.9px;font-size:8.7px;color:#666;">18</div>
<div class="t" style="left:1145.9399999999998px;top:126.9px;font-size:8.7px;color:#666;">19</div>
<div class="t" style="left:1202.3px;top:126.9px;font-size:8.7px;color:#666;">20</div>
<div class="t" style="left:57px;top:144.0px;font-size:8.7px;color:#666;transform:rotate(90deg);transform-origin:4px 4px;">0</div>
<div class="t" style="left:57px;top:200.36px;font-size:8.7px;color:#666;transform:rotate(90deg);transform-origin:4px 4px;">1</div>
<div class="t" style="left:57px;top:256.72px;font-size:8.7px;color:#666;transform:rotate(90deg);transform-origin:4px 4px;">2</div>
<div class="t" style="left:57px;top:313.08px;font-size:8.7px;color:#666;transform:rotate(90deg);transform-origin:4px 4px;">3</div>
<div class="t" style="left:57px;top:369.44px;font-size:8.7px;color:#666;transform:rotate(90deg);transform-origin:4px 4px;">4</div>
<div class="t" style="left:57px;top:425.8px;font-size:8.7px;color:#666;transform:rotate(90deg);transform-origin:4px 4px;">5</div>
<div class="t" style="left:57px;top:482.15999999999997px;font-size:8.7px;color:#666;transform:rotate(90deg);transform-origin:4px 4px;">6</div>
<div class="t" style="left:57px;top:538.52px;font-size:8.7px;color:#666;transform:rotate(90deg);transform-origin:4px 4px;">7</div>
<div class="t" style="left:57px;top:594.88px;font-size:8.7px;color:#666;transform:rotate(90deg);transform-origin:4px 4px;">8</div>
<div class="t" style="left:57px;top:651.24px;font-size:8.7px;color:#666;transform:rotate(90deg);transform-origin:4px 4px;">9</div>
<div class="t" style="left:57px;top:707.6px;font-size:8.7px;color:#666;transform:rotate(90deg);transform-origin:4px 4px;">10</div>
<div class="r" style="left:73px;top:141.5px;width:1178px;height:690.5px;background:#fff;"></div>
<div class="r" style="left:154px;top:180.3px;width:283px;height:395.5px;border:1.6px solid #ababab;background:#fff;"></div>
<svg style="left:0;top:0" width="1500" height="842"><rect x="436" y="180.7" width="282.6" height="394.5" fill="#000"/><rect x="459" y="204" width="236" height="348" fill="#8e2a8f"/><clipPath id="cl"><rect x="459" y="204" width="236" height="348"/></clipPath><g clip-path="url(#cl)"><polygon points="577,378 657,204 695,204 695,262" fill="#f29a2a"/><polygon points="577,378 695,387 695,459" fill="#f29a2a"/><polygon points="577,378 624,552 530,552" fill="#f29a2a"/><polygon points="577,378 459,458 459,387" fill="#f29a2a"/><polygon points="577,378 459,262 459,204 496,204" fill="#f29a2a"/><polygon points="577,378 496,204 531,204" fill="#000"/><polygon points="577,378 623,552 658,552" fill="#000"/><polygon points="577,378 623,204 657,204" fill="#000"/><polygon points="577,378 497,552 531,552" fill="#000"/><polygon points="577,378 459,262 459,297" fill="#000"/><polygon points="577,378 695,459 695,494" fill="#000"/><polygon points="577,378 459,368 459,387" fill="#000"/><polygon points="577,378 695,369 695,388" fill="#000"/><polygon points="577,378 459,458 459,493" fill="#000"/><polygon points="577,378 695,263 695,298" fill="#000"/></g><path d="M576.0,304.0 C580.3,303.9 585.2,304.5 589.0,306.5 C592.8,308.5 596.3,311.9 599.0,316.0 C601.7,320.1 603.6,326.3 605.0,331.0 C606.4,335.7 606.0,341.7 607.5,344.0 C609.0,346.3 609.4,345.7 614.0,345.0 C618.6,344.3 628.7,341.0 635.0,340.0 C641.3,339.0 647.8,338.0 652.0,339.0 C656.2,340.0 658.3,341.8 660.0,346.0 C661.7,350.2 662.5,357.5 662.0,364.0 C661.5,370.5 659.0,380.5 657.0,385.0 C655.0,389.5 652.7,390.8 650.0,391.0 C647.3,391.2 643.7,384.2 641.0,386.0 C638.3,387.8 636.8,397.5 634.0,402.0 C631.2,406.5 628.3,411.5 624.0,413.0 C619.7,414.5 612.3,410.8 608.0,411.0 C603.7,411.2 600.7,412.0 598.0,414.0 C595.3,416.0 593.2,419.2 592.0,423.0 C590.8,426.8 590.7,432.2 590.5,437.0 C590.3,441.8 591.2,447.8 591.0,452.0 C590.8,456.2 590.8,461.0 589.5,462.0 C588.2,463.0 586.2,461.2 583.0,458.0 C579.8,454.8 574.3,448.2 570.0,443.0 C565.7,437.8 561.0,431.3 557.0,427.0 C553.0,422.7 548.8,418.3 546.0,417.0 C543.2,415.7 541.8,417.8 540.0,419.0 C538.2,420.2 536.8,424.2 535.0,424.0 C533.2,423.8 531.2,422.0 529.0,418.0 C526.8,414.0 524.2,405.8 522.0,400.0 C519.8,394.2 518.2,385.0 516.0,383.0 C513.8,381.0 511.3,387.8 509.0,388.0 C506.7,388.2 504.3,388.0 502.0,384.0 C499.7,380.0 495.8,370.3 495.0,364.0 C494.2,357.7 495.0,350.5 497.0,346.0 C499.0,341.5 501.5,338.3 507.0,337.0 C512.5,335.7 523.5,336.8 530.0,338.0 C536.5,339.2 542.8,345.3 546.0,344.0 C549.2,342.7 547.7,334.7 549.0,330.0 C550.3,325.3 551.7,319.8 554.0,316.0 C556.3,312.2 559.3,309.0 563.0,307.0 C566.7,305.0 571.7,304.1 576.0,304.0Z" fill="#fff" stroke="#000" stroke-width="19.5" stroke-linejoin="round" paint-order="stroke"/><ellipse cx="560.5" cy="327.5" rx="4" ry="6.3" fill="#000" transform="rotate(-12 560.5 327.5)"/><ellipse cx="578.5" cy="326.5" rx="4.3" ry="6.3" fill="#000" transform="rotate(-30 578.5 326.5)"/><path d="M562.5 338.5 Q570 341 578.5 337 Q577 347 571 351.5 Q566 347 562.5 338.5Z" fill="#000"/><path d="M556 378 H597 M576.5 358 V398" stroke="#c8c8c8" stroke-width="0.8"/><rect x="458.5" y="203.5" width="236.5" height="348.5" fill="none" stroke="#a0a0a0" stroke-width="1"/><rect x="453.8" y="199.3" width="8.4" height="8.4" fill="#f4f4f4" stroke="#bbb" stroke-width="0.8"/><rect x="690.8" y="199.3" width="8.4" height="8.4" fill="#f4f4f4" stroke="#bbb" stroke-width="0.8"/><rect x="453.8" y="547.8" width="8.4" height="8.4" fill="#f4f4f4" stroke="#bbb" stroke-width="0.8"/><rect x="690.8" y="547.8" width="8.4" height="8.4" fill="#f4f4f4" stroke="#bbb" stroke-width="0.8"/></svg>
<div class="r" style="left:536px;top:174.5px;width:81px;height:16.5px;background:#2a2a2a;border-radius:2px;"></div>
<div class="t" style="left:476.5px;width:200px;text-align:center;top:178.7px;font-size:9px;color:#fff;font-weight:bold;">4.2&nbsp; in x 6.2&nbsp; in</div>
<div class="r" style="left:110px;top:799px;width:62px;height:24.5px;background:#f1f1f1;border-radius:12px;"></div>
<div class="t" style="left:-158px;width:300px;text-align:right;top:804.3px;font-size:15px;color:#aaa;">0%</div>
<svg style="left:151.5px;top:803px" width="16" height="16" viewBox="0 0 16 16"><circle cx="8" cy="8" r="7" fill="none" stroke="#bbb" stroke-width="1.3"/><path d="M8 4 V12 M4 8 H12" stroke="#bbb" stroke-width="1.3"/></svg>
<div class="r" style="left:55px;top:832px;width:1197px;height:10px;background:#efefef;"></div>
<div class="r" style="left:55px;top:832px;width:13px;height:10px;background:#f8f8f8;"></div>
<svg style="left:59px;top:834px" width="5" height="6" viewBox="0 0 5 6"><path d="M4 0 V6 L0 3Z" fill="#333"/></svg>
<div class="r" style="left:68.5px;top:832px;width:97.5px;height:10px;background:#bdbdbd;"></div>
<svg style="left:1242px;top:834px" width="5" height="6" viewBox="0 0 5 6"><path d="M0 0 V6 L4 3Z" fill="#222"/></svg>
<div class="r" style="left:1251.5px;top:122.5px;width:12.5px;height:719.5px;background:#efefef;"></div>
<svg style="left:1255px;top:128px" width="6" height="4" viewBox="0 0 6 4"><path d="M0 4 H6 L3 0.5Z" fill="#666"/></svg>
<div class="r" style="left:1251.5px;top:136.5px;width:12.5px;height:34px;background:#bdbdbd;"></div>
<svg style="left:1254px;top:822px" width="7" height="5" viewBox="0 0 7 5"><path d="M0 0.5 H7 L3.5 4.5Z" fill="#222"/></svg>
<div class="r" style="left:1251.5px;top:832px;width:12.5px;height:10px;background:#d4d4d4;"></div>
<div class="r" style="left:211px;top:119.5px;width:164.5px;height:267.5px;background:#fff;border-radius:3px;box-shadow:0 2px 6px rgba(0,0,0,0.18);"></div>
<div class="t" style="left:226.6px;top:138.7px;font-size:11.2px;color:#555;letter-spacing:0.2px;">Print type</div>
<div class="r" style="left:226.5px;top:156px;width:133px;height:25.5px;border:1px solid #e6e6e6;border-radius:3px;box-shadow:0 1px 2px rgba(0,0,0,0.06);"></div>
<div class="t" style="left:236.6px;top:163.9px;font-size:11.2px;color:#444;letter-spacing:0.3px;">Pattern</div>
<svg style="left:338.5px;top:166px" width="10" height="7" viewBox="0 0 10 7"><path d="M1 1 L5 5 L9 1" fill="none" stroke="#222" stroke-width="1.5"/></svg>
<div class="r" style="left:363px;top:199px;width:11px;height:157px;background:#f1f1f1;"></div>
<svg style="left:365.5px;top:202px" width="6" height="4" viewBox="0 0 6 4"><path d="M0 4 H6 L3 0.5Z" fill="#999"/></svg>
<div class="r" style="left:363.5px;top:211.5px;width:10px;height:26px;background:#bdbdbd;"></div>
<svg style="left:365.5px;top:344px" width="6" height="4" viewBox="0 0 6 4"><path d="M0 0 H6 L3 3.5Z" fill="#222"/></svg>
<div class="t" style="left:227px;top:363.4px;font-size:10px;color:#d4d4d4;">Edit Pattern</div>
<div class="t" style="left:338px;top:363.9px;font-size:9.4px;color:#666;font-weight:bold;">Filter</div>
<svg style="left:0;top:0" width="1500" height="842"><defs><clipPath id="tc00"><rect x="227" y="198.3" width="38" height="37.5"/></clipPath><clipPath id="tc01"><rect x="270" y="198.3" width="38" height="37.5"/></clipPath><clipPath id="tc02"><rect x="313" y="198.3" width="38" height="37.5"/></clipPath><clipPath id="tc10"><rect x="227" y="241.5" width="38" height="37.5"/></clipPath><clipPath id="tc11"><rect x="270" y="241.5" width="38" height="37.5"/></clipPath><clipPath id="tc12"><rect x="313" y="241.5" width="38" height="37.5"/></clipPath><clipPath id="tc20"><rect x="227" y="284.3" width="38" height="37.5"/></clipPath><clipPath id="tc21"><rect x="270" y="284.3" width="38" height="37.5"/></clipPath><clipPath id="tc22"><rect x="313" y="284.3" width="38" height="37.5"/></clipPath><clipPath id="tc30"><rect x="227" y="327.5" width="38" height="26.5"/></clipPath><clipPath id="tc31"><rect x="270" y="327.5" width="38" height="26.5"/></clipPath><clipPath id="tc32"><rect x="313" y="327.5" width="38" height="26.5"/></clipPath></defs><g clip-path="url(#tc00)"><g transform="translate(227,198.3)"><rect width="38" height="38" fill="#f7954a"/><circle cx="-0.8" cy="-0.5" r="2.5" fill="#111"/><circle cx="12.3" cy="-0.5" r="2.5" fill="#111"/><circle cx="25.3" cy="-0.5" r="2.5" fill="#111"/><circle cx="38.2" cy="-0.5" r="2.5" fill="#111"/><circle cx="5.6" cy="5.9" r="2.5" fill="#111"/><circle cx="18.9" cy="5.9" r="2.5" fill="#111"/><circle cx="31.7" cy="5.9" r="2.5" fill="#111"/><circle cx="-0.8" cy="12.3" r="2.5" fill="#111"/><circle cx="12.3" cy="12.3" r="2.5" fill="#111"/><circle cx="25.3" cy="12.3" r="2.5" fill="#111"/><circle cx="38.2" cy="12.3" r="2.5" fill="#111"/><circle cx="5.6" cy="18.7" r="2.5" fill="#111"/><circle cx="18.9" cy="18.7" r="2.5" fill="#111"/><circle cx="31.7" cy="18.7" r="2.5" fill="#111"/><circle cx="-0.8" cy="25.1" r="2.5" fill="#111"/><circle cx="12.3" cy="25.1" r="2.5" fill="#111"/><circle cx="25.3" cy="25.1" r="2.5" fill="#111"/><circle cx="38.2" cy="25.1" r="2.5" fill="#111"/><circle cx="5.6" cy="31.5" r="2.5" fill="#111"/><circle cx="18.9" cy="31.5" r="2.5" fill="#111"/><circle cx="31.7" cy="31.5" r="2.5" fill="#111"/><circle cx="-0.8" cy="37.9" r="2.5" fill="#111"/><circle cx="12.3" cy="37.9" r="2.5" fill="#111"/><circle cx="25.3" cy="37.9" r="2.5" fill="#111"/><circle cx="38.2" cy="37.9" r="2.5" fill="#111"/></g></g><g clip-path="url(#tc01)"><g transform="translate(270,198.3)"><rect width="38" height="38" fill="#fbf8f6"/><ellipse cx="15" cy="2.5" rx="6" ry="4" fill="#e78bc0"/><ellipse cx="28" cy="7.5" rx="4.5" ry="6" fill="#f0b04a" transform="rotate(-25 28 7.5)"/><ellipse cx="25.5" cy="21.5" rx="7" ry="5.5" fill="#f7c7dd" stroke="#a05070" stroke-width="0.5"/><ellipse cx="11" cy="30" rx="5" ry="6" fill="#e560a0"/><path d="M5 15 L11 10 M7 9 L10 17 M4 12 L12 13" stroke="#555" stroke-width="1.2"/><path d="M20 35 L28 31" stroke="#a03070" stroke-width="2.5"/><path d="M1 8 L6 5" stroke="#b07030" stroke-width="2"/></g></g><g clip-path="url(#tc02)"><g transform="translate(313,198.3)"><rect width="38" height="38" fill="#fbf6f9"/><path d="M0 2 Q8 8 14 4 Q20 0 26 6 Q30 12 38 8 M6 0 Q4 10 10 16 Q14 22 8 30 Q6 36 12 38 M24 0 Q20 12 26 20 Q30 28 24 38 M0 22 Q10 20 16 24 Q22 28 30 24 Q34 22 38 26 M30 0 Q34 14 38 16" fill="none" stroke="#f58fca" stroke-width="3.2"/><path d="M2 34 Q8 30 14 34 M18 12 Q24 14 30 12" fill="none" stroke="#f58fca" stroke-width="2"/><circle cx="10" cy="4" r="1" fill="#333"/><circle cx="31" cy="5" r="1" fill="#333"/><circle cx="25" cy="15" r="1" fill="#333"/><circle cx="11" cy="22" r="1" fill="#333"/><circle cx="22" cy="27" r="1" fill="#333"/><circle cx="29" cy="33" r="1" fill="#333"/></g></g><g clip-path="url(#tc10)"><g transform="translate(227,241.5)"><rect width="38" height="38" fill="#1a1828"/><ellipse cx="19" cy="1" rx="6" ry="4" fill="#ef9a3a"/><ellipse cx="5" cy="14" rx="5" ry="5" fill="#f2eee8"/><ellipse cx="18" cy="11" rx="3" ry="2.5" fill="#7a9a80"/><ellipse cx="21.5" cy="17" rx="3" ry="3" fill="#7a9a80"/><ellipse cx="34" cy="20" rx="5" ry="4.5" fill="#ef9a3a"/><ellipse cx="17" cy="31.5" rx="5.5" ry="4.5" fill="#ef9a3a"/><path d="M14 28 L17 21 L20 28Z" fill="#ef9a3a"/><circle cx="8" cy="24" r="0.9" fill="#ccc"/><circle cx="13" cy="20" r="0.9" fill="#ccc"/><circle cx="28" cy="9" r="0.9" fill="#ccc"/><circle cx="31" cy="30" r="0.9" fill="#ccc"/><circle cx="9" cy="34" r="0.9" fill="#ccc"/><circle cx="28" cy="36" r="0.9" fill="#ccc"/></g></g><g clip-path="url(#tc11)"><g transform="translate(270,241.5)"><rect width="38" height="38" fill="#3a1738"/><path d="M18.5 0 V9" stroke="#5a6a3a" stroke-width="2.5"/><ellipse cx="25" cy="24" rx="13" ry="14" fill="#f0a035"/><path d="M18 12 Q14 24 18 36 M25 10 V38 M32 12 Q36 24 32 36" fill="none" stroke="#c77a20" stroke-width="0.8"/><circle cx="22" cy="23" r="1.5" fill="#222"/><circle cx="30" cy="21" r="1.5" fill="#222"/><path d="M25 28 L34 30 L33 38 Z" fill="#222"/></g></g><g clip-path="url(#tc12)"><g transform="translate(313,241.5)"><rect width="38" height="38" fill="#7bb02c"/><circle cx="5" cy="16" r="5.5" fill="#f5f7ef"/><circle cx="20" cy="13" r="4.5" fill="#f5f7ef"/><circle cx="31" cy="4" r="5" fill="#f5f7ef"/><circle cx="17" cy="32" r="6.5" fill="#f5f7ef"/><circle cx="34" cy="30" r="4" fill="#f5f7ef"/><circle cx="2" cy="35" r="3" fill="#f5f7ef"/></g></g><g clip-path="url(#tc20)"><g transform="translate(227,284.3)"><rect width="38" height="38" fill="#93b3b3"/><path d="M12 12 Q16 7 23 8 Q26 3 29 8 Q35 7 38 12 Q32 11 29 13 Q26 10 24 13 Q20 10 12 12Z" fill="#111"/><path d="M21 23 Q26 20 30 16 Q31 21 28 23 Q24 24 21 23Z" fill="#111"/><path d="M8 27 Q12 24 16 25 Q13 28 8 27Z" fill="#111"/><path d="M5 34 Q8 32 11 38 H4Z" fill="#111"/><path d="M30 32 Q34 30 37 34 L38 38 Q33 35 30 32Z" fill="#111"/><path d="M1 12 L3 13" stroke="#111" stroke-width="1.5"/></g></g><g clip-path="url(#tc21)"><g transform="translate(270,284.3)"><rect width="38" height="38" fill="#5a8a3a"/><rect x="0" y="0" width="38" height="14" fill="#e8d27a"/><path d="M0 13 Q20 14 22 10 Q22 4 25 2 H38" fill="none" stroke="#1d6a2a" stroke-width="1.8"/><text x="0" y="9" font-family="Liberation Sans" font-weight="bold" font-size="9" fill="#e89a20">sun</text><rect x="0" y="14" width="14" height="24" fill="#f2e21a"/><circle cx="2" cy="26" r="4" fill="#4a3a1a"/><ellipse cx="29" cy="25" rx="9" ry="10" fill="#d8b8a0"/><ellipse cx="31" cy="28" rx="5" ry="7" fill="#f0d2c0"/><rect x="22" y="34" width="16" height="4" fill="#6a88b0"/></g></g><g clip-path="url(#tc22)"><g transform="translate(313,284.3)"><rect width="38" height="38" fill="#f2eeee"/><rect x="0" y="0" width="38" height="6" fill="#c8d2e2"/><path d="M0 17 Q10 12 20 12 Q30 12 38 10 V20 Q28 22 20 24 Q10 24 0 26Z" fill="#5aa8c0"/><path d="M0 18 Q12 14 20 14 Q30 14 38 12" fill="none" stroke="#1a78a0" stroke-width="2"/><rect x="0" y="24" width="38" height="5" fill="#c9d4e6"/><path d="M0 30 Q18 28 38 26 V38 H0Z" fill="#f2c8b0"/></g></g><g clip-path="url(#tc30)"><g transform="translate(227,327.5)"><rect width="38" height="38" fill="#f2b53a"/><path d="M0 0 H15 L8 20 L4 26 L0 26Z" fill="#f8d070"/><path d="M15 14 L28 8 L34 12 L22 20Z" fill="#fff7e0"/><path d="M20 26 Q30 22 38 24 V38 H18Z" fill="#b89040"/><path d="M5 10 V26" stroke="#a87020" stroke-width="1.5"/></g></g><g clip-path="url(#tc31)"><g transform="translate(270,327.5)"><rect width="38" height="38" fill="#fff"/><path d="M-37.5 38 L0.5 0" stroke="#f28aad" stroke-width="3"/><path d="M-25.0 38 L13.0 0" stroke="#f28aad" stroke-width="5"/><path d="M-12.5 38 L25.5 0" stroke="#f28aad" stroke-width="3"/><path d="M0.0 38 L38.0 0" stroke="#f28aad" stroke-width="5"/><path d="M12.5 38 L50.5 0" stroke="#f28aad" stroke-width="3"/><path d="M25.0 38 L63.0 0" stroke="#f28aad" stroke-width="5"/><path d="M37.5 38 L75.5 0" stroke="#f28aad" stroke-width="3"/><path d="M50.0 38 L88.0 0" stroke="#f28aad" stroke-width="5"/></g></g><g clip-path="url(#tc32)"><g transform="translate(313,327.5)"><rect width="38" height="38" fill="#fff"/><path d="M0 -1 L19 10 L38 -1" fill="none" stroke="#7dd35a" stroke-width="5"/><path d="M0 9 L19 21 L38 9" fill="none" stroke="#ef5a90" stroke-width="5"/><path d="M0 32 L8 22 L16 32 M22 32 L30 22 L38 32" fill="#7dd35a" stroke="#7dd35a" stroke-width="3"/></g></g></svg>
<svg style="left:368px;top:216px" width="16" height="28" viewBox="0 0 16 28"><path d="M1.5 1.5 V23 L6.5 18 L10 26 L13.5 24.5 L10 16.5 L16 16.5Z" fill="#000" stroke="#fff" stroke-width="1.2" stroke-linejoin="round"/></svg>
<svg style="left:0;top:0" width="1500" height="842"><path d="M233.5,100 L271.3,61 L278,77.2 L418.7,28 L423,41.7 L283,90.4 L287.8,106.5Z" fill="#000" stroke="#fff" stroke-width="1" stroke-linejoin="round"/><path d="M224,186 L169.9,199.4 L180.7,212.8 L93.5,286.1 L102.7,296.9 L190.7,224.4 L201.5,236.7Z" fill="#000" stroke="#fff" stroke-width="1" stroke-linejoin="round"/></svg>
<div class="r" style="left:1264px;top:85px;width:236px;height:757px;background:#fff;"></div>
<div class="r" style="left:1264px;top:85px;width:2px;height:757px;background:#ececec;"></div>
<div class="t" style="left:1280.7px;top:97.9px;font-size:11px;color:#1f8562;font-weight:bold;">Layers</div>
<div class="t" style="left:1339.5px;top:97.9px;font-size:11px;color:#777;letter-spacing:0.3px;">Color Sync</div>
<div class="r" style="left:1268px;top:118.3px;width:59px;height:3px;background:#0d6b48;border-radius:1.5px;"></div>
<div class="r" style="left:1266px;top:121px;width:234px;height:1px;background:#ececec;"></div>
<svg style="left:1282px;top:132px" width="16" height="16" viewBox="0 0 16 16"><circle cx="8" cy="8" r="3.5" fill="none" stroke="#ddd" stroke-width="1.2"/><path d="M1 1 L4 4 M15 1 L12 4 M1 15 L4 12 M15 15 L12 12" stroke="#ddd" stroke-width="1.2"/></svg>
<svg style="left:1313px;top:132px" width="16" height="16" viewBox="0 0 16 16"><path d="M4 11.5 H1 V1 H11.5 V4" fill="none" stroke="#333" stroke-width="1.3"/><rect x="4" y="4" width="11" height="11" fill="none" stroke="#333" stroke-width="1.3"/><path d="M9.5 6.5 V12.5 M6.5 9.5 H12.5" stroke="#333" stroke-width="1.3"/></svg>
<svg style="left:1345px;top:132px" width="15" height="16" viewBox="0 0 15 16"><path d="M1 3.5 H14 M5 3.5 V1.2 H10 V3.5 M2.5 3.5 L3.5 15 H11.5 L12.5 3.5 M6 6.5 V12 M9 6.5 V12" fill="none" stroke="#333" stroke-width="1.3"/></svg>
<div class="r" style="left:1266px;top:159.5px;width:234px;height:1px;background:#ececec;"></div>
<div class="r" style="left:1490px;top:160px;width:10px;height:607px;background:#f1f1f1;"></div>
<svg style="left:1492px;top:165px" width="6" height="4" viewBox="0 0 6 4"><path d="M0 4 H6 L3 0.5Z" fill="#888"/></svg>
<svg style="left:1492px;top:758px" width="6" height="4" viewBox="0 0 6 4"><path d="M0 0 H6 L3 3.5Z" fill="#666"/></svg>
<div class="r" style="left:1270.7px;top:254.5px;width:215.3px;height:42.5px;background:#bdeadb;border-radius:4px;"></div>
<div class="t" style="left:1321px;top:172.2px;font-size:11px;color:#555;letter-spacing:0.28px;">svg-starburst-ghost-craf...</div>
<div class="t" style="left:1321px;top:186.8px;font-size:11px;color:#888;">Basic Cut</div>
<div class="t" style="left:1321px;top:217.7px;font-size:11px;color:#555;letter-spacing:0.28px;">svg-starburst-ghost-craf...</div>
<div class="t" style="left:1321px;top:232.7px;font-size:11px;color:#888;">Basic Cut</div>
<div class="t" style="left:1321px;top:263.2px;font-size:11px;color:#222;font-weight:bold;letter-spacing:0.1px;">svg-starburst-ghost-cra...</div>
<div class="t" style="left:1321px;top:278.2px;font-size:11px;color:#888;">Print Then Cut</div>
<div class="t" style="left:1321px;top:307.4px;font-size:11px;color:#555;letter-spacing:0.28px;">svg-starburst-ghost-craf...</div>
<div class="t" style="left:1321px;top:323.4px;font-size:11px;color:#888;">Basic Cut</div>
<div class="t" style="left:1321px;top:353.1px;font-size:11px;color:#555;letter-spacing:0.28px;">svg-starburst-ghost-craf...</div>
<div class="t" style="left:1321px;top:368.7px;font-size:11px;color:#888;">Basic Cut</div>
<svg style="left:0;top:0" width="1500" height="842"><g transform="translate(1296,175.5) scale(0.097) translate(-484,-293)"><path d="M576.0,304.0 C580.3,303.9 585.2,304.5 589.0,306.5 C592.8,308.5 596.3,311.9 599.0,316.0 C601.7,320.1 603.6,326.3 605.0,331.0 C606.4,335.7 606.0,341.7 607.5,344.0 C609.0,346.3 609.4,345.7 614.0,345.0 C618.6,344.3 628.7,341.0 635.0,340.0 C641.3,339.0 647.8,338.0 652.0,339.0 C656.2,340.0 658.3,341.8 660.0,346.0 C661.7,350.2 662.5,357.5 662.0,364.0 C661.5,370.5 659.0,380.5 657.0,385.0 C655.0,389.5 652.7,390.8 650.0,391.0 C647.3,391.2 643.7,384.2 641.0,386.0 C638.3,387.8 636.8,397.5 634.0,402.0 C631.2,406.5 628.3,411.5 624.0,413.0 C619.7,414.5 612.3,410.8 608.0,411.0 C603.7,411.2 600.7,412.0 598.0,414.0 C595.3,416.0 593.2,419.2 592.0,423.0 C590.8,426.8 590.7,432.2 590.5,437.0 C590.3,441.8 591.2,447.8 591.0,452.0 C590.8,456.2 590.8,461.0 589.5,462.0 C588.2,463.0 586.2,461.2 583.0,458.0 C579.8,454.8 574.3,448.2 570.0,443.0 C565.7,437.8 561.0,431.3 557.0,427.0 C553.0,422.7 548.8,418.3 546.0,417.0 C543.2,415.7 541.8,417.8 540.0,419.0 C538.2,420.2 536.8,424.2 535.0,424.0 C533.2,423.8 531.2,422.0 529.0,418.0 C526.8,414.0 524.2,405.8 522.0,400.0 C519.8,394.2 518.2,385.0 516.0,383.0 C513.8,381.0 511.3,387.8 509.0,388.0 C506.7,388.2 504.3,388.0 502.0,384.0 C499.7,380.0 495.8,370.3 495.0,364.0 C494.2,357.7 495.0,350.5 497.0,346.0 C499.0,341.5 501.5,338.3 507.0,337.0 C512.5,335.7 523.5,336.8 530.0,338.0 C536.5,339.2 542.8,345.3 546.0,344.0 C549.2,342.7 547.7,334.7 549.0,330.0 C550.3,325.3 551.7,319.8 554.0,316.0 C556.3,312.2 559.3,309.0 563.0,307.0 C566.7,305.0 571.7,304.1 576.0,304.0Z" fill="#fff" stroke="#777" stroke-width="1.1" vector-effect="non-scaling-stroke"/></g><g transform="translate(1296.5,220.5) scale(0.097) translate(-484,-293)"><path d="M576.0,304.0 C580.3,303.9 585.2,304.5 589.0,306.5 C592.8,308.5 596.3,311.9 599.0,316.0 C601.7,320.1 603.6,326.3 605.0,331.0 C606.4,335.7 606.0,341.7 607.5,344.0 C609.0,346.3 609.4,345.7 614.0,345.0 C618.6,344.3 628.7,341.0 635.0,340.0 C641.3,339.0 647.8,338.0 652.0,339.0 C656.2,340.0 658.3,341.8 660.0,346.0 C661.7,350.2 662.5,357.5 662.0,364.0 C661.5,370.5 659.0,380.5 657.0,385.0 C655.0,389.5 652.7,390.8 650.0,391.0 C647.3,391.2 643.7,384.2 641.0,386.0 C638.3,387.8 636.8,397.5 634.0,402.0 C631.2,406.5 628.3,411.5 624.0,413.0 C619.7,414.5 612.3,410.8 608.0,411.0 C603.7,411.2 600.7,412.0 598.0,414.0 C595.3,416.0 593.2,419.2 592.0,423.0 C590.8,426.8 590.7,432.2 590.5,437.0 C590.3,441.8 591.2,447.8 591.0,452.0 C590.8,456.2 590.8,461.0 589.5,462.0 C588.2,463.0 586.2,461.2 583.0,458.0 C579.8,454.8 574.3,448.2 570.0,443.0 C565.7,437.8 561.0,431.3 557.0,427.0 C553.0,422.7 548.8,418.3 546.0,417.0 C543.2,415.7 541.8,417.8 540.0,419.0 C538.2,420.2 536.8,424.2 535.0,424.0 C533.2,423.8 531.2,422.0 529.0,418.0 C526.8,414.0 524.2,405.8 522.0,400.0 C519.8,394.2 518.2,385.0 516.0,383.0 C513.8,381.0 511.3,387.8 509.0,388.0 C506.7,388.2 504.3,388.0 502.0,384.0 C499.7,380.0 495.8,370.3 495.0,364.0 C494.2,357.7 495.0,350.5 497.0,346.0 C499.0,341.5 501.5,338.3 507.0,337.0 C512.5,335.7 523.5,336.8 530.0,338.0 C536.5,339.2 542.8,345.3 546.0,344.0 C549.2,342.7 547.7,334.7 549.0,330.0 C550.3,325.3 551.7,319.8 554.0,316.0 C556.3,312.2 559.3,309.0 563.0,307.0 C566.7,305.0 571.7,304.1 576.0,304.0Z" fill="#000" stroke="#000" stroke-width="22" stroke-linejoin="round"/></g></svg>
<svg style="left:1298px;top:266px" width="14" height="18" viewBox="0 0 14 18"><path d="M4.5 0.8 H9.5 L8.5 4.5 H5.5Z" fill="#6a1a7a"/><path d="M2 6 L2.5 8 M12 6 L11.5 8" stroke="#6a1a7a" stroke-width="1.8"/><path d="M5 10.5 L2 17 M9 10.5 L12 17" stroke="#6a1a7a" stroke-width="2.3" stroke-linecap="round"/></svg>
<svg style="left:1298px;top:311px" width="14" height="19" viewBox="0 0 14 19"><path d="M1.5 1 L4 6 M12.5 1 L10 6 M1 9.5 L4 11 M13 9.5 L10 11" stroke="#c07a10" stroke-width="2.4"/><path d="M7 13 L10 18 H4Z" fill="#c07a10"/></svg>
<svg style="left:1298.5px;top:356.5px" width="14" height="18" viewBox="0 0 14 18"><rect x="0" y="0" width="13.5" height="18" fill="#111"/><path d="M7 9 L2 2 M7 9 L12 2 M7 9 L1.5 9 M7 9 L12.5 9 M7 9 L2.5 16 M7 9 L11.5 16 M7 9 V1.5 M7 9 V16.5" stroke="#fff" stroke-width="1.1"/><circle cx="7" cy="9" r="2.5" fill="#111"/></svg>
<svg style="left:1280px;top:406px" width="7" height="9" viewBox="0 0 7 9"><path d="M1.5 1 L5.5 4.5 L1.5 8" fill="none" stroke="#444" stroke-width="1.5"/></svg>
<svg style="left:1297px;top:406px" width="17" height="10" viewBox="0 0 17 10"><path d="M13 1 H4.5 Q1 1 1 5 Q1 9 4.5 9 H12.5 Q15.5 9 15.5 6 Q15.5 3.5 12.5 3.5 H5 Q3.5 3.5 3.5 5 Q3.5 6.5 5 6.5 H12" fill="none" stroke="#444" stroke-width="1.3"/></svg>
<div class="t" style="left:1321px;top:406.0px;font-size:11px;color:#555;">Attach</div>
<div class="r" style="left:1266px;top:767px;width:234px;height:41px;background:#f3f3f3;"></div>
<div class="r" style="left:1276px;top:772.5px;width:41.5px;height:29px;border:1.3px solid #aaa;background:#fff;"></div>
<div class="t" style="left:1325px;top:784.2px;font-size:7.5px;color:#555;">Blank Canvas</div>
<div class="r" style="left:1266px;top:808px;width:234px;height:34px;background:#fff;"></div>
<svg style="left:1281px;top:810px" width="16" height="16" viewBox="0 0 16 16"><circle cx="6" cy="6" r="4.5" fill="none" stroke="#d0d0d0" stroke-width="1.1"/><rect x="6" y="6" width="8.5" height="8.5" fill="none" stroke="#d0d0d0" stroke-width="1.1"/></svg>
<svg style="left:1316px;top:810px" width="25" height="16" viewBox="0 0 25 16"><rect x="1" y="1" width="8" height="8" fill="none" stroke="#d0d0d0" stroke-width="1.1"/><circle cx="9" cy="10" r="4.5" fill="none" stroke="#d0d0d0" stroke-width="1.1"/><path d="M18 6 H23 L20.5 9Z" fill="#d0d0d0"/></svg>
<svg style="left:1360px;top:813px" width="17" height="10" viewBox="0 0 17 10"><path d="M13 1 H4.5 Q1 1 1 5 Q1 9 4.5 9 H12.5 Q15.5 9 15.5 6 Q15.5 3.5 12.5 3.5 H5 Q3.5 3.5 3.5 5 Q3.5 6.5 5 6.5 H12" fill="none" stroke="#d0d0d0" stroke-width="1.2"/></svg>
<svg style="left:1397px;top:810px" width="17" height="16" viewBox="0 0 17 16"><path d="M8.5 1 V6 M6.5 4 L8.5 6 L10.5 4 M1.5 6 L8.5 10.5 L15.5 6 M1.5 10 L8.5 14.5 L15.5 10" fill="none" stroke="#d0d0d0" stroke-width="1.1"/></svg>
<svg style="left:1438px;top:810px" width="17" height="17" viewBox="0 0 17 17"><circle cx="8.5" cy="8.5" r="7.3" fill="none" stroke="#d0d0d0" stroke-width="1.1" stroke-dasharray="2 1.5"/></svg>
<div class="t" style="left:1189px;width:200px;text-align:center;top:831.7px;font-size:7.5px;color:#d0d0d0;">Slice</div>
<div class="t" style="left:1227px;width:200px;text-align:center;top:831.7px;font-size:7.5px;color:#d0d0d0;">Combine</div>
<div class="t" style="left:1269px;width:200px;text-align:center;top:831.7px;font-size:7.5px;color:#d0d0d0;">Attach</div>
<div class="t" style="left:1306px;width:200px;text-align:center;top:831.7px;font-size:7.5px;color:#d0d0d0;">Flatten</div>
<div class="t" style="left:1347px;width:200px;text-align:center;top:831.7px;font-size:7.5px;color:#d0d0d0;">Contour</div>
<div class="r" style="left:10px;top:736px;width:123.5px;height:95.5px;border-radius:50%;background:#c83a20;box-shadow:0 0 0 1.2px rgba(255,255,255,0.85);"></div>
<div class="t" style="left:22px;top:754px;font-family:'Liberation Serif',serif;font-style:italic;font-size:35px;color:#fff;letter-spacing:-1.5px;-webkit-text-stroke:0.35px #c83a20;">Craft</div>
<div class="t" style="left:97px;top:768px;font-family:'Liberation Serif',serif;font-weight:bold;font-size:9px;color:#fff;">WITH</div>
<div class="t" style="left:31px;top:785px;font-family:'Liberation Serif',serif;font-style:italic;font-size:35px;color:#fff;letter-spacing:-1.5px;-webkit-text-stroke:0.35px #c83a20;">Sarah</div>
<svg style="left:0;top:0" width="1500" height="842"><path d="M97 779 Q104 776 112 779 Q119 781 122 777" fill="none" stroke="#fff" stroke-width="1.4"/><path d="M78 789 Q84 783 90 786 Q94 790 88 792 M95 787 Q104 784 112 786 Q118 789 111 797" fill="none" stroke="#fff" stroke-width="1"/><path d="M24 762 Q30 755 40 757" fill="none" stroke="#fff" stroke-width="1.2"/></svg>
</body></html>
